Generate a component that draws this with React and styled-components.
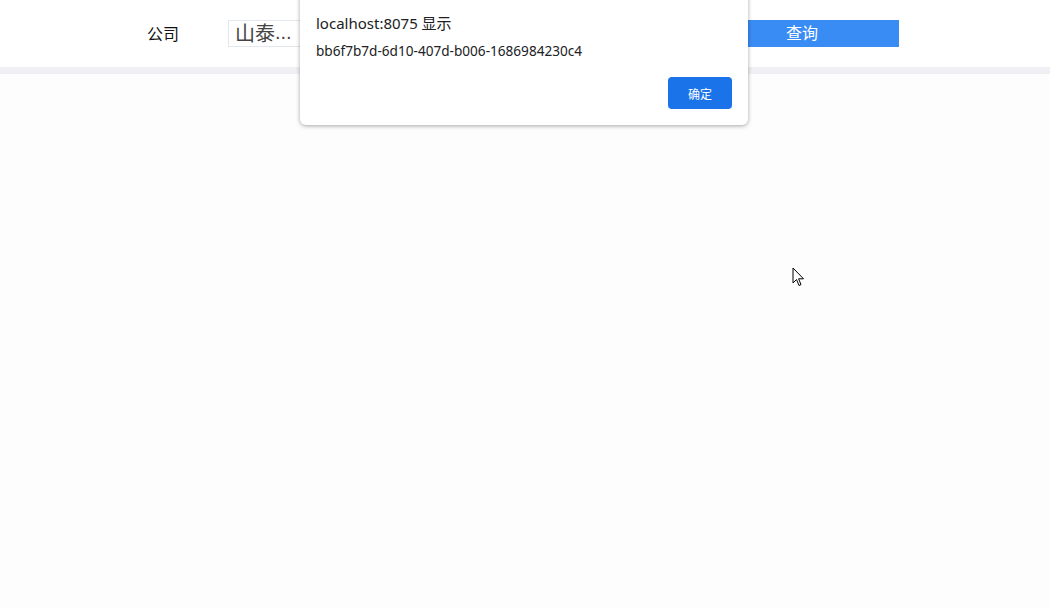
import React from "react";
import styled, { createGlobalStyle } from "styled-components";

const GlobalStyle = createGlobalStyle`
  html, body {
    margin: 0;
    padding: 0;
    background: #fdfdfd;
    font-family: "Noto Sans", "Noto Sans CJK SC", "Microsoft YaHei", sans-serif;
  }
`;

const Page = styled.div`
  position: relative;
  width: 1050px;
  height: 608px;
  overflow: hidden;
  background: #fdfdfd;
`;

const Header = styled.div`
  height: 67px;
  background: #ffffff;
  display: flex;
  align-items: center;
  padding-left: 147px;
  box-sizing: border-box;
`;

const Label = styled.span`
  width: 81px;
  font-size: 16px;
  color: #111;
  padding-bottom: 2px;
  font-family: "Noto Sans CJK SC", sans-serif;
`;

const Input = styled.div`
  width: 460px;
  height: 27px;
  box-sizing: border-box;
  border: 1px solid #e3e8ee;
  display: flex;
  align-items: center;
  padding: 0 0 2px 6px;
  font-size: 20px;
  color: #444;
  font-family: "Noto Sans CJK SC", sans-serif;
`;

const Dots = styled.span`
  font-family: "Liberation Sans", sans-serif;
  font-size: 20px;
`;

const SearchButton = styled.div`
  margin-left: 17px;
  width: 194px;
  height: 27px;
  box-sizing: border-box;
  padding-bottom: 3px;
  background: #3a8cf5;
  color: #fff;
  font-size: 16px;
  display: flex;
  align-items: center;
  justify-content: center;
  font-family: "Noto Sans CJK SC", sans-serif;
`;

const Band = styled.div`
  height: 7px;
  background: #f0f0f4;
`;

const Dialog = styled.div`
  position: absolute;
  left: 300px;
  top: -8px;
  width: 448px;
  height: 133px;
  box-sizing: border-box;
  background: #fff;
  border-radius: 6px;
  box-shadow: 0 1px 4px rgba(0, 0, 0, 0.35);
  padding: 20px 16px 0 16px;
  display: flex;
  flex-direction: column;
`;

const DialogTitle = styled.div`
  font-size: 15px;
  color: #202124;
  line-height: 22px;
  font-family: "Noto Sans", "Noto Sans CJK SC", sans-serif;
`;

const DialogMessage = styled.div`
  margin-top: 8px;
  font-size: 13.6px;
  color: #202124;
  line-height: 18px;
  font-family: "Noto Sans", sans-serif;
`;

const DialogActions = styled.div`
  display: flex;
  justify-content: flex-end;
  margin-top: 17px;
`;

const OkButton = styled.div`
  width: 64px;
  height: 32px;
  border-radius: 4px;
  background: #1a73e8;
  color: #fff;
  font-size: 12px;
  display: flex;
  align-items: center;
  justify-content: center;
  font-family: "Noto Sans CJK SC", sans-serif;
`;

const Cursor = styled.svg`
  position: absolute;
  left: 792px;
  top: 267px;
`;

export default function App() {
  return (
    <Page>
      <GlobalStyle />
      <Header>
        <Label>公司</Label>
        <Input>
          山泰<Dots>...</Dots>
        </Input>
        <SearchButton>查询</SearchButton>
      </Header>
      <Band />
      <Dialog>
        <DialogTitle>localhost:8075 显示</DialogTitle>
        <DialogMessage>bb6f7b7d-6d10-407d-b006-1686984230c4</DialogMessage>
        <DialogActions>
          <OkButton>确定</OkButton>
        </DialogActions>
      </Dialog>
      <Cursor width="14" height="21" viewBox="0 0 14 21">
        <path
          d="M1 1 L1 16 L4.5 12.5 L7 18.5 L9 17.6 L6.6 11.8 L11.5 11.8 Z"
          fill="#fff"
          stroke="#000"
          strokeWidth="1"
          strokeLinejoin="round"
        />
      </Cursor>
    </Page>
  );
}
